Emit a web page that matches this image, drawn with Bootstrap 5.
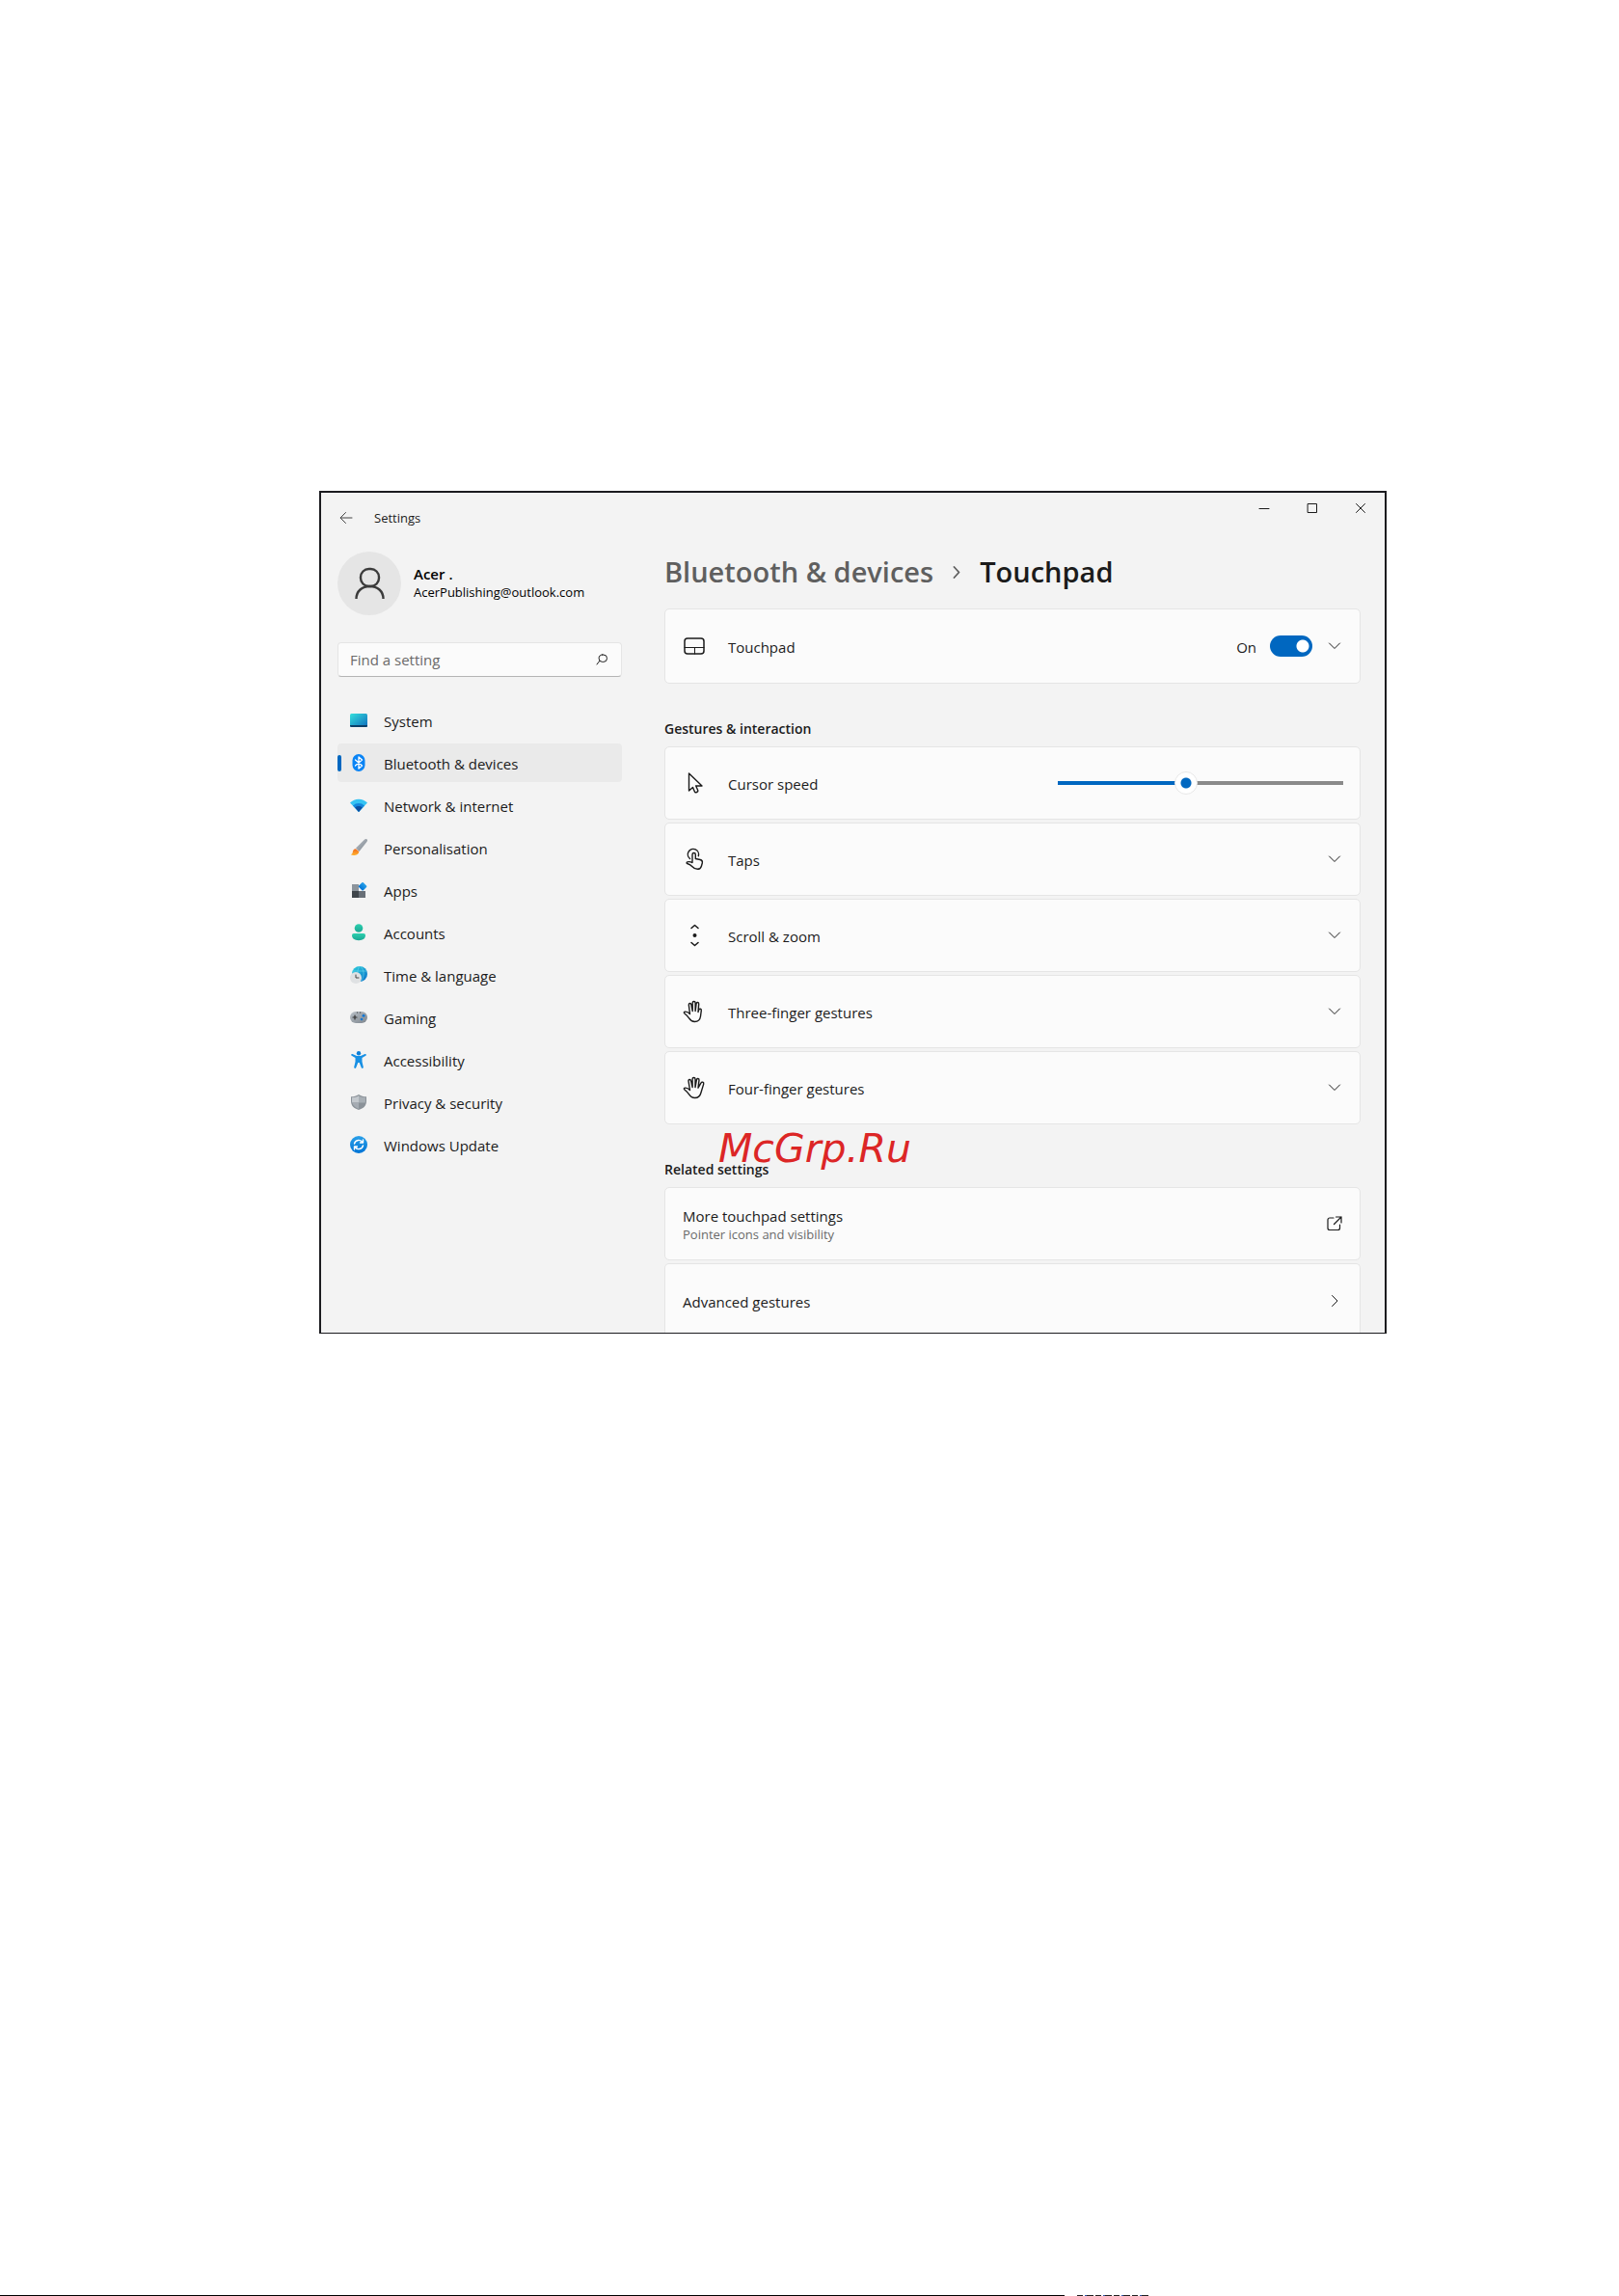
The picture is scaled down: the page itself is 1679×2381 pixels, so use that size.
<!DOCTYPE html>
<html lang="en">
<head>
<meta charset="utf-8">
<meta name="viewport" content="width=device-width, initial-scale=1">
<title>Settings - Touchpad</title>
<link href="https://cdn.jsdelivr.net/npm/bootstrap@5.3.0/dist/css/bootstrap.min.css" rel="stylesheet">
<style>
  :root { --ink: #1b1b1b; --accent: #0067c0; --pane: #f3f3f3; --tile: #fbfbfb; --line: #e5e5e5; }
  body { font-family: "Open Sans", "Noto Sans", sans-serif; font-size: 15px; line-height: 20px; color: var(--ink); background: #fff; }
  .sheet { padding: 509px 241px 0 331px; }
  .app-window { background: var(--pane); border: 2px solid #1b1b1f; border-bottom-width: 1px; overflow: hidden; }
  .title-bar { height: 56px; padding-left: 12px; font-size: 13px; }
  .title-bar button, .tile-action { background: none; border: 0; color: inherit; }
  .back-btn { width: 28px; height: 52px; }
  .app-name { line-height: 52px; margin-left: 15px; }
  .caption-btn { width: 50px; height: 32px; }
  .side-pane { width: 312px; padding: 5px 0 0 17px; }
  .avatar { width: 66px; height: 66px; background: #e5e5e5; }
  .account { gap: 13px; line-height: 19px; color: #000; }
  .account-mail { font-size: 13px; }
  .find-box { margin-top: 28px; height: 36px; background: var(--tile); border: 1px solid var(--line); border-bottom-color: #b5b5b5; border-radius: 4px; padding: 0 14px 0 12px; }
  .find-box input { background: none; border: 0; outline: 0; min-width: 0; padding: 0; color: var(--ink); }
  .find-box input::placeholder { color: #6a6a6a; opacity: 1; }
  .side-nav { margin-top: 25px; gap: 4px; }
  .side-nav a { position: relative; height: 40px; padding: 2px 13px 0; gap: 17px; border-radius: 4px; color: var(--ink); text-decoration: none; }
  .side-nav svg { margin-bottom: 2px; }
  .side-nav a.active { background: #eaeaea; }
  .side-nav a.active::before { content: ""; position: absolute; left: 0; top: 12px; width: 4px; height: 17px; border-radius: 2px; background: var(--accent); }
  .main-pane { padding: 4px 25px 0 44px; min-width: 0; }
  .crumbs { font-size: 29px; line-height: 44px; font-weight: 600; gap: 20px; margin-bottom: 16px; }
  .crumbs a { color: #5f5f5f; text-decoration: none; }
  .crumbs h1 { font: inherit; margin: 0; }
  .section-title { font-size: 14px; line-height: 20px; font-weight: 600; margin: 37px 0 8px; }
  .tiles { gap: 3px; }
  .tile { width: 100%; min-height: 76px; background: var(--tile); border: 1px solid var(--line); border-radius: 5px; padding: 0 17px 0 18px; color: var(--ink); text-align: left; text-decoration: none; }
  .tile-tall { min-height: 78px; }
  .tile-label { margin-left: 23px; padding-top: 2px; }
  .tile-text { padding-top: 2px; }
  .tile-last { min-height: 72px; padding-top: 4px; border-bottom: 0; border-bottom-left-radius: 0; border-bottom-right-radius: 0; }
  .tile-note { font-size: 13px; line-height: 18px; color: #6a6a6a; }
  .toggle { appearance: none; width: 44px; height: 22px; margin: 0 14px; border-radius: 11px; background: radial-gradient(circle at 34px 11px, #fff 6px, var(--accent) 7px); }
  .speed { appearance: none; width: 296px; height: 24px; margin: 0; background: linear-gradient(to right, var(--accent) 45%, #8a8a8a 45%) center / 100% 4px no-repeat; }
  .speed::-webkit-slider-thumb { appearance: none; width: 24px; height: 24px; border-radius: 50%; border: 1px solid #e8e8e8; background: radial-gradient(circle, var(--accent) 5px, #fff 6px); }
  .speed::-moz-range-thumb { width: 22px; height: 22px; border-radius: 50%; border: 1px solid #e8e8e8; background: radial-gradient(circle, var(--accent) 5px, #fff 6px); }
  .related { position: relative; }
  .stamp { position: absolute; left: 56px; top: -36px; font: italic 41px/48px "DejaVu Sans", sans-serif; color: #dc2626; }
  .rule { width: 1104px; height: 1px; background: #000; }
  .rule-tail { width: 74px; height: 1px; margin-left: 13px; background: repeating-linear-gradient(to right, #222 0 6px, #fff 6px 8px, #35a 8px 10px, #222 10px 17px, #fff 17px 19px); }
  svg { flex: none; display: block; }
  .ln { fill: none; stroke: currentColor; stroke-linecap: round; stroke-linejoin: round; }
</style>
</head>
<body class="min-vh-100 d-flex flex-column">
<svg width="0" height="0" class="position-absolute" aria-hidden="true">
  <defs>
    <linearGradient id="gSys" x2="1" y2="1"><stop stop-color="#35e0dc"/><stop offset="1" stop-color="#0f6cbd"/></linearGradient>
    <linearGradient id="gTeal" x2="0" y2="1"><stop stop-color="#2ccfae"/><stop offset="1" stop-color="#1aa894"/></linearGradient>
    <linearGradient id="gGlobe" x2="1" y2="1"><stop stop-color="#2fd0dc"/><stop offset="1" stop-color="#0b6fc8"/></linearGradient>
    <linearGradient id="gGrey" x2="1" y2="1"><stop stop-color="#b9c0c7"/><stop offset="1" stop-color="#7d858d"/></linearGradient>
    <linearGradient id="gBlue" x2="0" y2="1"><stop stop-color="#2aa0e8"/><stop offset="1" stop-color="#0074d6"/></linearGradient>
    <linearGradient id="gFlame" x2="0" y2="1"><stop stop-color="#f26a1b"/><stop offset="1" stop-color="#ffb22e"/></linearGradient>
    <symbol id="down" viewBox="0 0 14 14"><path class="ln" d="M1.500 4 7 9.500 12.500 4"/></symbol>
  </defs>
</svg>

<main class="sheet">
  <div class="app-window">
    <header class="title-bar d-flex align-items-start">
      <button class="back-btn p-0 d-flex align-items-center justify-content-center" aria-label="Back"><svg width="14" height="14" viewBox="0 0 14 14"><path class="ln" d="M13 7H1.200M6.500 1.500 1 7l5.500 5.500" style="stroke:#444"/></svg></button>
      <span class="app-name">Settings</span>
      <div class="d-flex ms-auto">
        <button class="caption-btn p-0 d-flex align-items-center justify-content-center" aria-label="Minimise"><svg width="12" height="12"><path class="ln" d="M1 6.500h10"/></svg></button>
        <button class="caption-btn p-0 d-flex align-items-center justify-content-center" aria-label="Maximise"><svg width="12" height="12"><rect class="ln" x="1.500" y="1.500" width="9" height="9"/></svg></button>
        <button class="caption-btn p-0 d-flex align-items-center justify-content-center" aria-label="Close"><svg width="12" height="12"><path class="ln" d="m1.500 1.500 9 9m0-9-9 9"/></svg></button>
      </div>
    </header>

    <div class="d-flex">
      <aside class="side-pane flex-shrink-0">
        <div class="account d-flex align-items-center">
          <div class="avatar rounded-circle d-flex align-items-center justify-content-center">
            <svg width="34" height="36" viewBox="0 0 34 36"><g class="ln" style="stroke:#3b3b3b;stroke-width:2.400;stroke-linecap:butt"><rect x="8" y="3" width="19" height="18" rx="8.500"/><path d="M3.500 34c0-8 6-13 14-13s14 5 14 13"/></g></svg>
          </div>
          <div><div class="fw-semibold">Acer .</div><div class="account-mail">AcerPublishing@outlook.com</div></div>
        </div>
        <div class="find-box d-flex align-items-center">
          <input class="flex-grow-1" type="text" placeholder="Find a setting" aria-label="Find a setting">
          <svg width="12" height="12" viewBox="0 0 12 12"><path class="ln" d="M3.800 7.400 1 11M6.800 1h1a3.700 3.700 0 0 1 0 7.400h-1A3.700 3.700 0 0 1 6.800 1Z"/></svg>
        </div>
        <nav class="side-nav d-flex flex-column">
          <a class="d-flex align-items-center" href="#system"><svg width="18" height="18"><rect y="2" width="18" height="14" rx="1.500" fill="url(#gSys)"/><path d="M0 14h18v.500A1.500 1.500 0 0 1 16.500 16h-15A1.500 1.500 0 0 1 0 14.500Z" fill="#0b3f68"/></svg>System</a>
          <a class="active d-flex align-items-center" href="#devices" aria-current="page"><svg width="18" height="18"><rect x="2.500" y="0" width="13" height="18" rx="6.500" fill="#0a84f5"/><path class="ln" style="stroke:#fff;stroke-width:1.300" d="m5.500 6 7 6L9 15V3l3.500 3-7 6"/></svg>Bluetooth &amp; devices</a>
          <a class="d-flex align-items-center" href="#network"><svg width="18" height="18"><path d="M0 6.500a12.500 12.500 0 0 1 18 0L9 16Z" fill="#35c3f3"/><path d="M3 9.500a8.500 8.500 0 0 1 12 0L9 16Z" fill="#1487dc"/><path d="M5.200 11.500a5.600 5.600 0 0 1 7.600 0L9 16Z" fill="#0b4fa0"/></svg>Network &amp; internet</a>
          <a class="d-flex align-items-center" href="#personalisation"><svg width="18" height="18"><path d="M17.600.500c-.8-.8-2-.4-3 .5L6 9.500l3.500 3.500 7.900-10c.7-.9.900-1.900.2-2.500Z" fill="url(#gGrey)"/><path d="M6 10.300c-2 .2-3 1.500-3.200 3.200-.1 1.300-.8 2.300-2 2.800 2.600 1.500 8.500.7 8.400-3.300Z" fill="url(#gFlame)"/></svg>Personalisation</a>
          <a class="d-flex align-items-center" href="#apps"><svg width="18" height="18"><path d="M2 3h7v7H2z" fill="#8c949c"/><path d="M2 10h7v7H2z" fill="#3f454b"/><path d="M9 10h7v7H9z" fill="#686f77"/><rect x="9.800" y="2" width="6.600" height="6.600" rx="1" transform="rotate(45 13.100 5.300)" fill="url(#gBlue)"/></svg>Apps</a>
          <a class="d-flex align-items-center" href="#accounts"><svg width="18" height="18"><circle cx="9" cy="4.500" r="4.300" fill="url(#gTeal)"/><path d="M4 10h10a2 2 0 0 1 2 2c0 3-2.500 5.200-7 5.200S2 15 2 12a2 2 0 0 1 2-2Z" fill="url(#gTeal)"/></svg>Accounts</a>
          <a class="d-flex align-items-center" href="#time"><svg width="18" height="18"><circle cx="10" cy="8" r="8" fill="url(#gGlobe)"/><path class="ln" style="stroke:#79e0f0;stroke-width:.5" d="M3 5h14M10 0c-3 4-3 9 0 15M11 0c4 4 4 10 1 15"/><circle cx="6" cy="12" r="6" fill="#dfe1e3"/><path class="ln" style="stroke:#444" d="M6 9v3h3"/></svg>Time &amp; language</a>
          <a class="d-flex align-items-center" href="#gaming"><svg width="18" height="18"><rect y="3" width="18" height="12" rx="6" fill="url(#gGrey)"/><path class="ln" style="stroke:#333;stroke-width:1.200" d="M3 9h4M5 7v4M7.500 4h.1M10.500 4h.1"/><circle cx="14" cy="7.300" r="1.500" fill="#1378d4"/><circle cx="12" cy="11" r="1.300" fill="#1378d4"/></svg>Gaming</a>
          <a class="d-flex align-items-center" href="#accessibility"><svg width="18" height="18"><circle cx="9" cy="2.200" r="2.200" fill="#0c7fd8"/><path d="M2.500 3 7 5h4l4.500-2c1.300-.3 1.700 1.300.8 1.800L12.500 7v4l1.300 5.600c.2 1.400-1.500 1.800-2 .6L9.700 12H8.300l-2.100 5.200c-.5 1.200-2.200.8-2-.6L5.500 11V7L1.700 4.800C.8 4.300 1.200 2.700 2.500 3Z" fill="#1890e4"/></svg>Accessibility</a>
          <a class="d-flex align-items-center" href="#privacy"><svg width="18" height="18"><path d="M9 1c2.500 1.700 5 2.200 8 2.300V8c0 4.500-3 7.500-8 9-5-1.500-8-4.500-8-9V3.300C4 3.200 6.500 2.700 9 1Z" fill="#8b9299"/><path d="M9 2.200v7.300H2.200A8 8 0 0 1 2 8V4.200c2.600-.1 5-.6 7-2Z" fill="#c3c8cd"/><path d="M9 2.200c2 1.400 4.400 1.900 7 2V8l-.2 1.500H9Z" fill="#a8afb5"/><path d="M9 9.500H2.300C3 12.500 5.500 14.700 9 15.900Z" fill="#a5abb2"/></svg>Privacy &amp; security</a>
          <a class="d-flex align-items-center" href="#update"><svg width="18" height="18"><circle cx="9" cy="9" r="9" fill="url(#gBlue)"/><path class="ln" style="stroke:#fff;stroke-width:1.400" d="M4.500 8A4.600 4.600 0 0 1 13 6.800M13.500 4v3h-3M13.500 10A4.600 4.600 0 0 1 5 11.200M4.500 14v-3h3"/></svg>Windows Update</a>
        </nav>
      </aside>

      <section class="main-pane flex-grow-1">
        <nav class="crumbs d-flex align-items-center" aria-label="Breadcrumb">
          <a href="#devices">Bluetooth &amp; devices</a>
          <svg width="8" height="14" viewBox="0 0 8 14"><path class="ln" style="stroke:#5f5f5f;stroke-width:1.800" d="M1.500 2 6.500 7.500 1.500 13"/></svg>
          <h1>Touchpad</h1>
        </nav>

        <div class="tile tile-tall d-flex align-items-center">
          <svg width="24" height="20" viewBox="0 0 24 20"><path class="ln" style="stroke-width:1.500" d="M5 2h14a3 3 0 0 1 3 3v10a3 3 0 0 1-3 3H5a3 3 0 0 1-3-3V5a3 3 0 0 1 3-3Z"/><path class="ln" d="M2 11.500h20M12.500 12v6"/></svg>
          <label class="tile-label" for="padSwitch">Touchpad</label>
          <span class="tile-text ms-auto">On</span>
          <input class="toggle" type="checkbox" role="switch" id="padSwitch" checked>
          <button class="tile-action p-0" aria-label="Show touchpad options"><svg width="18" height="14" viewBox="-2 0 18 14"><use href="#down" width="14" height="14"/></svg></button>
        </div>

        <h2 class="section-title">Gestures &amp; interaction</h2>
        <div class="tiles d-flex flex-column">
          <div class="tile d-flex align-items-center">
            <svg width="24" height="24" viewBox="0 0 24 24"><path class="ln" style="stroke-width:1.400" d="M6.500 2v18l4-3.500 2 4.700c.4 1 4 .3 3.200-1.700l-2-4.500H20Z"/></svg>
            <label class="tile-label" for="speed">Cursor speed</label>
            <input class="speed ms-auto" type="range" id="speed" min="0" max="1000" value="445">
          </div>
          <button class="tile d-flex align-items-center">
            <svg width="24" height="24" viewBox="0 0 24 24"><path class="ln" style="stroke-width:1.400" d="M10 15.500V7.200c0-2.200 3.300-2.200 3.300 0v4.300l4.800 1c1.900.5 2.600 1.700 2.200 3.500l-.9 3.200c-.6 2-1.900 3.100-4 3.100-2.500 0-3.800-.8-5.400-2.600-1.500-1.700-3-2.500-5.300-3.200-.8-.3-.8-1.200.2-1.600 1.500-.5 3-.4 5.100.6M7.500 11.500a5.600 5.600 0 1 1 8.800-2.800"/></svg>
            <span class="tile-label me-auto">Taps</span><svg width="18" height="14" viewBox="-2 0 18 14"><use href="#down" width="14" height="14"/></svg>
          </button>
          <button class="tile d-flex align-items-center">
            <svg width="24" height="24" viewBox="0 0 24 24"><path class="ln" style="stroke-width:1.600" d="m9 4.500 3.500-3 3.500 3M9 19.500l3.500 3 3.500-3"/><circle cx="12.500" cy="12" r="2" fill="currentColor"/></svg>
            <span class="tile-label me-auto">Scroll &amp; zoom</span><svg width="18" height="14" viewBox="-2 0 18 14"><use href="#down" width="14" height="14"/></svg>
          </button>
          <button class="tile d-flex align-items-center">
            <svg width="24" height="24" viewBox="0 0 24 24"><path class="ln" style="stroke-width:1.400" d="M7.500 14.500 6.300 5.200c-.2-2 2.200-2.300 2.600-.4l1.300 6.700V3c0-2.100 2.900-2.100 2.900 0v8.500l1-7.700c.3-1.900 2.800-1.600 2.600.4L16 12.500l.7-2.400c.7-1.500 2.800-.9 2.600.7L18.500 17c-.5 3.500-2.500 5.500-6 5.500-2.600 0-4.300-1-5.700-3.300C5.500 17.200 4 15.600 1.700 13.700 1 13 1.500 12.200 2.500 12.100c2-.2 3.600.8 5 2.400Z"/></svg>
            <span class="tile-label me-auto">Three-finger gestures</span><svg width="18" height="14" viewBox="-2 0 18 14"><use href="#down" width="14" height="14"/></svg>
          </button>
          <button class="tile d-flex align-items-center">
            <svg width="24" height="24" viewBox="0 0 24 24"><path class="ln" style="stroke-width:1.400" d="M7.500 14.500 6 5.200c-.3-2 2.200-2.300 2.600-.4l1.500 6.700V3c0-2.100 2.900-2.100 2.900 0v8.500l1.400-7.700c.3-1.900 2.800-1.600 2.600.4l-1 8 2.900-5.100c.9-1.700 3.300-.9 2.800 1L19 17c-.9 3.700-2.900 5.500-6.400 5.500-2.600 0-4.400-1-5.800-3.300C5.500 17.200 4 15.600 1.700 13.700 1 13 1.500 12.200 2.500 12.100c2-.2 3.600.8 5 2.400Z"/></svg>
            <span class="tile-label me-auto">Four-finger gestures</span><svg width="18" height="14" viewBox="-2 0 18 14"><use href="#down" width="14" height="14"/></svg>
          </button>
        </div>

        <div class="related">
          <h2 class="section-title">Related settings</h2>
          <span class="stamp">McGrp.Ru</span>
        </div>
        <div class="tiles d-flex flex-column">
          <a class="tile d-flex align-items-center" href="#more">
            <span class="tile-text me-auto">More touchpad settings<span class="tile-note d-block">Pointer icons and visibility</span></span>
            <svg width="18" height="18" viewBox="0 0 18 18"><path class="ln" style="stroke-width:1.200" d="M8 3H4a2 2 0 0 0-2 2v8.500a2 2 0 0 0 2 2h8.500a2 2 0 0 0 2-2V10M10.500 2H16v6M16 2 8.500 9.500"/></svg>
          </a>
          <a class="tile tile-last d-flex align-items-center" href="#advanced">
            <span class="tile-text me-auto">Advanced gestures</span>
            <svg width="18" height="14" viewBox="0 0 18 14"><path class="ln" d="M6.500 1.500 12 7l-5.500 5.500"/></svg>
          </a>
        </div>
      </section>
    </div>
  </div>
</main>

<footer class="d-flex mt-auto"><div class="rule"></div><div class="rule-tail"></div></footer>
<script src="https://cdn.jsdelivr.net/npm/bootstrap@5.3.0/dist/js/bootstrap.bundle.min.js"></script>
</body>
</html>
